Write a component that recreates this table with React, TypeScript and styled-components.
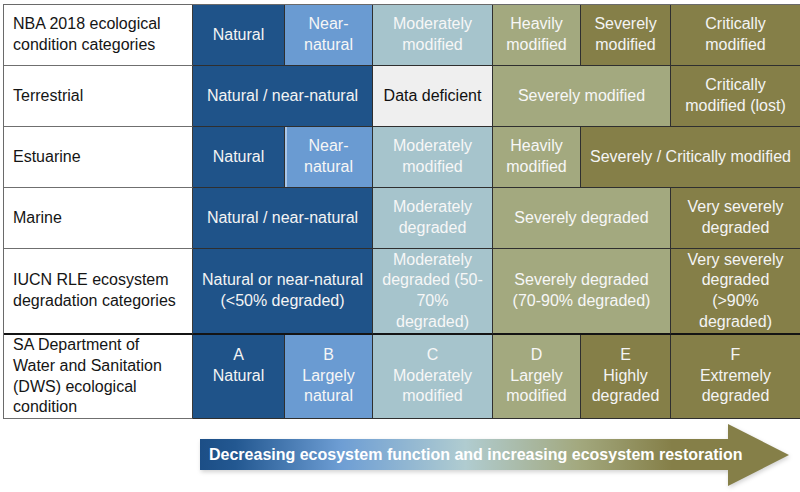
import React from "react";
import styled, { createGlobalStyle } from "styled-components";

const Global = createGlobalStyle`
  html, body { margin: 0; padding: 0; background: #fff; overflow: hidden; }
  body { font-family: "Liberation Sans", Arial, sans-serif; }
`;

type Tone = "natural" | "near" | "mod" | "dd" | "heavy" | "sev";

const tones: Record<Tone, { bg: string; fg: string }> = {
  natural: { bg: "#1f5389", fg: "#f4f4f4" },
  near: { bg: "#6a9bd2", fg: "#f6f6f6" },
  mod: { bg: "#a6c4cc", fg: "#f7f7f7" },
  dd: { bg: "#efefef", fg: "#111" },
  heavy: { bg: "#a3a97f", fg: "#f7f7f7" },
  sev: { bg: "#857f48", fg: "#f4f4f4" },
};

const Page = styled.div`
  width: 800px;
  height: 492px;
  box-sizing: border-box;
  padding: 4px 0 0 3px;
  overflow: hidden;
  background: #fff;
`;

const Table = styled.div`
  display: grid;
  grid-template-columns: 189px 92px 88px 120px 88px 90px 130px;
  grid-template-rows: 61px 61px 61px 61px 86px 84px;
  width: max-content;
  border-top: 1px solid #6a6a6a;
  border-left: 1px solid #6a6a6a;
`;

const Label = styled.div<{ $thick?: boolean }>`
  box-sizing: border-box;
  display: flex;
  align-items: center;
  padding-left: 9px;
  font-size: 16px;
  line-height: 20.7px;
  color: #151515;
  background: #fff;
  border-right: 1px solid #3a3a3a;
  border-bottom: ${(p) => (p.$thick ? "2px solid #141414" : "1px solid #6f6f6f")};
`;

const Cell = styled.div<{ $tone: Tone; $span: number; $thick?: boolean; $top?: boolean; $glow?: boolean }>`
  box-sizing: border-box;
  grid-column: span ${(p) => p.$span};
  display: flex;
  align-items: ${(p) => (p.$top ? "flex-start" : "center")};
  justify-content: center;
  text-align: center;
  padding-top: ${(p) => (p.$top ? "10px" : "0")};
  font-size: 16px;
  line-height: 20.7px;
  background: ${(p) => tones[p.$tone].bg};
  color: ${(p) => tones[p.$tone].fg};
  border-right: 1px solid #2f2f2f;
  border-bottom: ${(p) => (p.$thick ? "2px solid #141414" : "1px solid #2f2f2f")};
  box-shadow: ${(p) => (p.$glow ? "inset 2px 0 0 #a9c6e8" : "none")};
`;

const ArrowRow = styled.div`
  position: relative;
  margin: 5px 0 0 197px;
  width: 590px;
  height: 63px;
`;

const ArrowShape = styled.svg`
  position: absolute;
  left: 0;
  top: 0;
  filter: drop-shadow(1px 2px 2px rgba(0, 0, 0, 0.18));
`;

const ArrowText = styled.span`
  position: relative;
  display: block;
  padding-left: 9px;
  line-height: 62px;
  font-size: 16px;
  font-weight: bold;
  color: #fff;
  white-space: nowrap;
`;

type C = { t: Tone; s: number; text: string[]; glow?: boolean };
type Row = { label: string[]; cells: C[]; thick?: boolean; top?: boolean };

const rows: Row[] = [
  {
    label: ["NBA 2018 ecological", "condition categories"],
    cells: [
      { t: "natural", s: 1, text: ["Natural"] },
      { t: "near", s: 1, text: ["Near-", "natural"] },
      { t: "mod", s: 1, text: ["Moderately", "modified"] },
      { t: "heavy", s: 1, text: ["Heavily", "modified"] },
      { t: "sev", s: 1, text: ["Severely", "modified"] },
      { t: "sev", s: 1, text: ["Critically", "modified"] },
    ],
  },
  {
    label: ["Terrestrial"],
    cells: [
      { t: "natural", s: 2, text: ["Natural / near-natural"] },
      { t: "dd", s: 1, text: ["Data deficient"] },
      { t: "heavy", s: 2, text: ["Severely modified"] },
      { t: "sev", s: 1, text: ["Critically", "modified (lost)"] },
    ],
  },
  {
    label: ["Estuarine"],
    cells: [
      { t: "natural", s: 1, text: ["Natural"] },
      { t: "near", s: 1, text: ["Near-", "natural"], glow: true },
      { t: "mod", s: 1, text: ["Moderately", "modified"] },
      { t: "heavy", s: 1, text: ["Heavily", "modified"] },
      { t: "sev", s: 2, text: ["Severely / Critically modified"] },
    ],
  },
  {
    label: ["Marine"],
    cells: [
      { t: "natural", s: 2, text: ["Natural / near-natural"] },
      { t: "mod", s: 1, text: ["Moderately", "degraded"] },
      { t: "heavy", s: 2, text: ["Severely degraded"] },
      { t: "sev", s: 1, text: ["Very severely", "degraded"] },
    ],
  },
  {
    label: ["IUCN RLE ecosystem", "degradation categories"],
    thick: true,
    cells: [
      { t: "natural", s: 2, text: ["Natural or near-natural", "(<50% degraded)"] },
      { t: "mod", s: 1, text: ["Moderately", "degraded (50-", "70%", "degraded)"] },
      { t: "heavy", s: 2, text: ["Severely degraded", "(70-90% degraded)"] },
      { t: "sev", s: 1, text: ["Very severely", "degraded", "(>90%", "degraded)"] },
    ],
  },
  {
    label: ["SA Department of", "Water and Sanitation", "(DWS) ecological", "condition"],
    top: true,
    cells: [
      { t: "natural", s: 1, text: ["A", "Natural"] },
      { t: "near", s: 1, text: ["B", "Largely", "natural"] },
      { t: "mod", s: 1, text: ["C", "Moderately", "modified"] },
      { t: "heavy", s: 1, text: ["D", "Largely", "modified"] },
      { t: "sev", s: 1, text: ["E", "Highly", "degraded"] },
      { t: "sev", s: 1, text: ["F", "Extremely", "degraded"] },
    ],
  },
];

const Lines = ({ lines }: { lines: string[] }) => (
  <div>
    {lines.map((l, i) => (
      <React.Fragment key={i}>
        {i > 0 && <br />}
        {l}
      </React.Fragment>
    ))}
  </div>
);

export default function App() {
  return (
    <Page>
      <Global />
      <Table>
        {rows.map((r, ri) => (
          <React.Fragment key={ri}>
            <Label $thick={r.thick}>
              <Lines lines={r.label} />
            </Label>
            {r.cells.map((c, ci) => (
              <Cell key={ci} $tone={c.t} $span={c.s} $thick={r.thick} $top={r.top} $glow={c.glow}>
                <Lines lines={c.text} />
              </Cell>
            ))}
          </React.Fragment>
        ))}
      </Table>
      <ArrowRow>
        <ArrowShape width="590" height="63" viewBox="0 0 590 63">
          <defs>
            <linearGradient id="arrowGrad" gradientUnits="userSpaceOnUse" x1="0" y1="0" x2="590" y2="0">
              <stop offset="0" stopColor="#1c4e86" />
              <stop offset="0.06" stopColor="#235891" />
              <stop offset="0.24" stopColor="#6e9ed4" />
              <stop offset="0.45" stopColor="#b0ccd0" />
              <stop offset="0.64" stopColor="#a3a97f" />
              <stop offset="0.8" stopColor="#857f48" />
              <stop offset="1" stopColor="#857f48" />
            </linearGradient>
          </defs>
          <path d="M0 15 H528 V0 L589 31 L528 62 V46 H0 Z" fill="url(#arrowGrad)" />
        </ArrowShape>
        <ArrowText>Decreasing ecosystem function and increasing ecosystem restoration</ArrowText>
      </ArrowRow>
    </Page>
  );
}
